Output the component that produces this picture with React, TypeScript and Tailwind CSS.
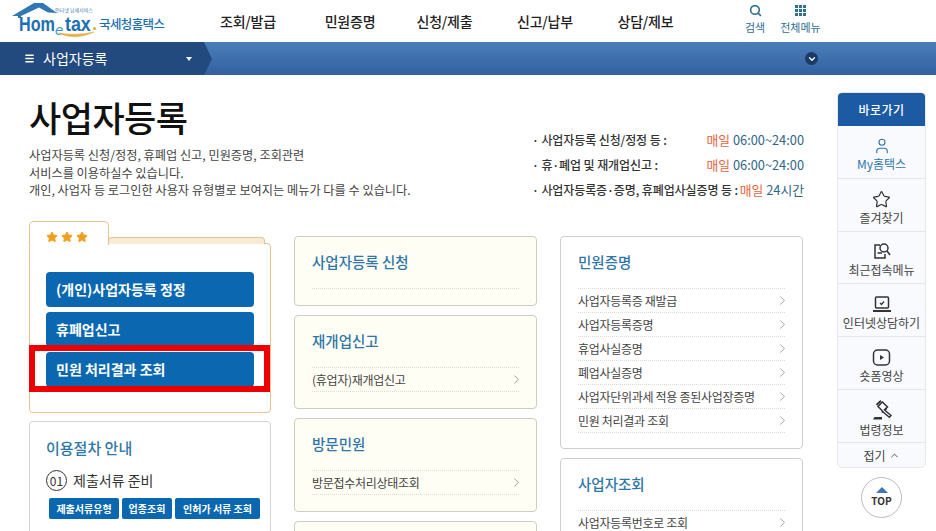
import { ChevronDown, ChevronRight, ChevronUp, Menu, Search, Star, User } from "lucide-react";

const FONT = "font-['Noto_Sans_CJK_KR','Noto_Sans',sans-serif]";

const NAV = [
  { label: "조회/발급", w: "w-[102px]" },
  { label: "민원증명", w: "w-[102px]" },
  { label: "신청/제출", w: "w-[87px]" },
  { label: "신고/납부", w: "w-[114px]" },
  { label: "상담/제보", w: "w-[87px]" },
];

const HOURS = [
  { label: "사업자등록 신청/정정 등 :", time: "06:00~24:00" },
  { label: "휴·폐업 및 재개업신고 :", time: "06:00~24:00" },
  { label: "사업자등록증·증명, 휴폐업사실증명 등 :", time: "24시간" },
];

const CERTS = [
  "사업자등록증 재발급",
  "사업자등록증명",
  "휴업사실증명",
  "폐업사실증명",
  "사업자단위과세 적용 종된사업장증명",
  "민원 처리결과 조회",
];

function Logo() {
  return (
    <div className="relative w-[170px] h-[42px] shrink-0">
      <svg className="absolute left-[12px] top-[3px]" width="46" height="16" viewBox="0 0 46 16">
        <path d="M0 13 L22 0 L31 0 L45 10 L36 9.5 L27 4.5 L9 13 L9 15 L6 15 L6 13 Z" fill="#2f77b5" />
      </svg>
      <span className="absolute left-[55px] top-[7px] text-[5px] leading-[6px] whitespace-nowrap text-[#3f7fb5]">인터넷 납세서비스</span>
      <span className="absolute left-[19px] top-[16px] origin-left scale-x-[0.77] text-[21px] leading-[15px] font-bold text-[#1c6fb0] font-['Liberation_Sans',sans-serif]">Hom</span>
      <span className="absolute left-[55px] top-[24px] text-[15px] leading-[11px] italic text-[#3aa0c8] font-['Liberation_Sans',sans-serif]">e</span>
      <span className="absolute left-[65px] top-[16px] origin-left scale-x-[0.85] text-[21px] leading-[15px] font-bold text-[#1c6fb0] font-['Liberation_Sans',sans-serif]">tax</span>
      <span className="absolute left-[93px] top-[27px] w-[3px] h-[3px] rounded-full bg-[#e8a23a]" />
      <svg className="absolute left-[57px] top-[31px]" width="38" height="9" viewBox="0 0 38 9">
        <path d="M1 2 Q18 10 37 1 Q20 5 1 2 Z" fill="#e8b04a" stroke="#e8b04a" strokeWidth="0.6" />
      </svg>
      <span className="absolute left-[99px] top-[15px] text-[12.5px] leading-[18px] tracking-[-0.6px] font-medium text-[#1c6fb0]">국세청홈택스</span>
    </div>
  );
}

function Header() {
  return (
    <div className="flex items-center h-[42px] bg-white">
      <Logo />
      <nav className="flex ml-[27px] text-[14px] font-medium text-[#222] text-center tracking-[-0.2px]">
        {NAV.map((n) => (
          <span key={n.label} className={n.w}>{n.label}</span>
        ))}
      </nav>
      <div className="flex ml-[56px] -mt-[4px] gap-[15px] text-[11px] leading-[14px] text-[#2f6f8f] text-center">
        <div className="flex flex-col items-center">
          <Search size={13} strokeWidth={3} className="mb-[3px] text-[#2f6f8f]" />
          검색
        </div>
        <div className="flex flex-col items-center">
          <svg className="mb-[3px]" width="13" height="13" viewBox="0 0 13 13" fill="#2f6f8f">
            {[1, 5, 9].map((y) =>
              [1, 5, 9].map((x) => <rect key={`${x}-${y}`} x={x} y={y} width="3" height="3" />),
            )}
          </svg>
          전체메뉴
        </div>
      </div>
    </div>
  );
}

function LocationBar() {
  return (
    <div className="relative flex items-center h-[33px] bg-gradient-to-b from-[#4a7fbb] to-[#33609f]">
      <div className="flex items-center w-[204px] h-full pl-[24px] pr-[12px] bg-[#224a7e] text-white text-[14px]">
        <Menu size={11} strokeWidth={3} className="mr-[8px]" />
        <span>사업자등록</span>
        <span className="ml-auto w-0 h-0 border-x-[3px] border-x-transparent border-t-[4px] border-t-white" />
      </div>
      <svg className="h-full" width="8" height="33" viewBox="0 0 8 33">
        <path d="M0 0 L8 17 L0 33 Z" fill="#224a7e" />
      </svg>
      <span className="absolute left-[805px] top-[10px] flex items-center justify-center w-[13px] h-[13px] rounded-full bg-[#1c3a63] text-white">
        <ChevronDown size={10} strokeWidth={3} />
      </span>
    </div>
  );
}

function Intro() {
  return (
    <div className="flex justify-between h-[146px]">
      <div>
        <h1 className="mt-[18px] text-[35px] leading-[48px] font-medium text-[#111] tracking-[-0.5px]">사업자등록</h1>
        <p className="mt-[6px] text-[12.2px] leading-[17.5px] text-[#444] whitespace-nowrap">
          사업자등록 신청/정정, 휴폐업 신고, 민원증명, 조회관련
          <br />
          서비스를 이용하실수 있습니다.
          <br />
          개인, 사업자 등 로그인한 사용자 유형별로 보여지는 메뉴가 다를 수 있습니다.
        </p>
      </div>
      <ul className="mt-[52px] w-[272px] text-[12px] leading-[25px] font-medium text-[#333]">
        {HOURS.map((h) => (
          <li key={h.label} className="flex justify-between whitespace-nowrap">
            <span className="tracking-[-0.1px]">· {h.label}</span>
            <span className="font-normal text-[12.8px]">
              <span className="text-[#e8623c]">매일</span> <span className="text-[#2f6687]">{h.time}</span>
            </span>
          </li>
        ))}
      </ul>
    </div>
  );
}

function ActionButton({ label }: { label: string }) {
  return (
    <div className="flex items-center h-[35px] pl-[10px] rounded-[4px] bg-[#0b68b0] text-white text-[14px] font-bold">
      {label}
    </div>
  );
}

function FolderCard() {
  return (
    <div className="relative mt-[22px] h-[170px] rounded-[4px] border border-[#e3c48d] bg-white">
      {/* folder tab with the sheet behind it */}
      <div className="absolute left-[78px] top-[-7px] w-[157px] h-[7px] rounded-t-[4px] border border-b-0 border-[#e3c48d] bg-[#f6ecd6]" />
      <div className="absolute left-[-1px] top-[-23px] flex items-center gap-[3px] w-[80px] h-[24px] pl-[16px] pt-[6px] rounded-t-[5px] border border-b-0 border-[#e3c48d] bg-white">
        {[0, 1, 2].map((i) => (
          <Star key={i} size={12} fill="#f0a020" stroke="#f0a020" />
        ))}
      </div>
      <div className="flex flex-col gap-[5px] mx-[16px] mt-[28px]">
        <ActionButton label="(개인)사업자등록 정정" />
        <ActionButton label="휴폐업신고" />
        <ActionButton label="민원 처리결과 조회" />
      </div>
      {/* red highlight over the third button */}
      <div className="absolute left-[-1px] top-[101px] w-[241px] h-[47px] border-[6px] border-[#ee0000]" />
    </div>
  );
}

function ProcedureCard() {
  return (
    <div className="mt-[8px] h-[160px] rounded-[4px] border border-[#d4d4d4] bg-white px-[16px]">
      <h3 className="mt-[15px] text-[15px] leading-[22px] font-medium text-[#2f76a8]">이용절차 안내</h3>
      <div className="flex items-center gap-[6px] mt-[11px] text-[14px] text-[#333]">
        <span className="flex items-center justify-center w-[21px] h-[21px] rounded-full border border-[#333] text-[12px]">01</span>
        제출서류 준비
      </div>
      <div className="flex gap-[3px] mt-[7px] ml-[3px] text-[10px] font-bold text-white">
        <span className="flex items-center justify-center shrink-0 w-[70px] h-[21px] rounded-[2px] bg-[#0b68b0]">제출서류유형</span>
        <span className="flex items-center justify-center shrink-0 w-[50px] h-[21px] rounded-[2px] bg-[#0b68b0]">업종조회</span>
        <span className="flex items-center justify-center shrink-0 w-[85px] h-[21px] rounded-[2px] bg-[#0b68b0]">인허가 서류 조회</span>
      </div>
    </div>
  );
}

function MenuCard({
  title,
  items,
  cream,
  h,
}: {
  title: string;
  items: string[];
  cream?: boolean;
  h: string;
}) {
  return (
    <div className={`${h} shrink-0 rounded-[4px] border px-[17px] pt-[13px] ${cream ? "border-[#cfcdbf] bg-[#fffef5]" : "border-[#cfcfcf] bg-white"}`}>
      <h3 className="h-[38px] text-[14.5px] leading-[24px] font-medium text-[#2f76a8]">{title}</h3>
      <ul className="border-t border-dotted border-[#dedcd0]">
        {items.map((item) => (
          <li key={item} className="flex items-center justify-between h-[24px] border-b border-dotted border-[#dedcd0] text-[12px] text-[#444] tracking-[-0.3px]">
            {item}
            <ChevronRight size={15} strokeWidth={1} className="text-[#666] -mr-[5px]" />
          </li>
        ))}
      </ul>
    </div>
  );
}

function SideItem({ icon, label, active }: { icon: React.ReactNode; label: string; active?: boolean }) {
  return (
    <div className={`flex flex-col items-center justify-center h-[52.8px] pt-[6px] border-b border-[#e6e6e6] text-[12px] leading-[16px] ${active ? "text-[#2f76a8]" : "text-[#444]"}`}>
      {icon}
      <span className="mt-[1px] whitespace-nowrap">{label}</span>
    </div>
  );
}

function ShortsIcon() {
  return (
    <svg width="19" height="19" viewBox="0 0 19 19" fill="none" stroke="#333" strokeWidth="1.5">
      <rect x="1.5" y="2" width="16" height="15" rx="4" />
      <path d="M8 7 L12 9.5 L8 12 Z" fill="#333" stroke="none" />
    </svg>
  );
}

function GavelIcon() {
  return (
    <svg width="22" height="21" viewBox="0 0 22 21" fill="none" stroke="#333" strokeWidth="1.5">
      <path d="M7 6.5 L11.5 2 L16.5 7 L12 11.5 Z" fill="#fff" />
      <path d="M5.5 5 L10 0.8 M11 12.5 L15.5 8.3" strokeWidth="2" />
      <path d="M13 9.5 L20 15.5 L18.3 17.3 L11 11" fill="#fff" />
      <path d="M2 19.5 H11 V17 H3.5 Z" fill="#333" stroke="none" />
    </svg>
  );
}

function Sidebar() {
  return (
    <aside className="w-[89px] shrink-0 mt-[17px] mr-[10px]">
      <div className="rounded-[5px] border border-[#e8e8e8] bg-[#f9fafd] overflow-hidden">
        <div className="flex items-center justify-center h-[33px] bg-[#1d5aa4] text-white text-[12px] font-medium tracking-[0.5px]">바로가기</div>
        <SideItem active label="My홈택스" icon={<User size={18} strokeWidth={1.5} className="text-[#2f76a8]" />} />
        <SideItem label="즐겨찾기" icon={<Star size={19} strokeWidth={1.5} className="text-[#333]" />} />
        <SideItem
          label="최근접속메뉴"
          icon={
            <svg width="19" height="19" viewBox="0 0 19 19" fill="none" stroke="#333" strokeWidth="1.5">
              <path d="M8 3 H3 V16 H13 V12" />
              <circle cx="12" cy="6" r="4" />
              <path d="M15 9 L18 13" />
              <path d="M5.5 11 H10" />
            </svg>
          }
        />
        <SideItem
          label="인터넷상담하기"
          icon={
            <svg width="20" height="19" viewBox="0 0 20 19" fill="none" stroke="#333" strokeWidth="1.5">
              <rect x="3.5" y="2" width="13" height="11" rx="1" />
              <path d="M1 16 H19" strokeWidth="2" />
              <path d="M8 8 L9.5 9.5 L12 6.5" strokeWidth="1.2" />
            </svg>
          }
        />
        <SideItem label="숏폼영상" icon={<ShortsIcon />} />
        <SideItem label="법령정보" icon={<GavelIcon />} />
        <div className="flex items-center justify-center gap-[3px] h-[24px] pt-[2px] text-[12px] text-[#444]">
          접기 <ChevronUp size={11} />
        </div>
      </div>
      <div className="flex flex-col items-center justify-center w-[41px] h-[41px] mx-auto mt-[9px] rounded-full border border-[#bbb] bg-white text-[10px] leading-[12px] font-bold text-[#333]">
        <span className="w-0 h-0 mb-[2px] border-x-[6px] border-x-transparent border-b-[6px] border-b-[#3f76b5]" />
        TOP
      </div>
    </aside>
  );
}

export default function App() {
  return (
    <div className={`w-[936px] h-[531px] overflow-hidden bg-white ${FONT}`}>
      <Header />
      <LocationBar />
      <div className="flex">
        <main className="w-[775px] ml-[29px] mr-[33px] shrink-0">
          <Intro />
          <div className="flex gap-[23px] items-start">
            <div className="w-[242px] shrink-0">
              <FolderCard />
              <ProcedureCard />
            </div>
            <div className="flex flex-col gap-[9px] w-[243px] shrink-0 mt-[15px]">
              <MenuCard cream h="h-[70px]" title="사업자등록 신청" items={[]} />
              <MenuCard cream h="h-[94px]" title="재개업신고" items={["(휴업자)재개업신고"]} />
              <MenuCard cream h="h-[94px]" title="방문민원" items={["방문접수처리상태조회"]} />
              <MenuCard cream h="h-[60px]" title="" items={[]} />
            </div>
            <div className="flex flex-col gap-[9px] w-[243px] shrink-0 mt-[15px]">
              <MenuCard h="h-[213px]" title="민원증명" items={CERTS} />
              <MenuCard h="h-[94px]" title="사업자조회" items={["사업자등록번호로 조회"]} />
            </div>
          </div>
        </main>
        <Sidebar />
      </div>
    </div>
  );
}
